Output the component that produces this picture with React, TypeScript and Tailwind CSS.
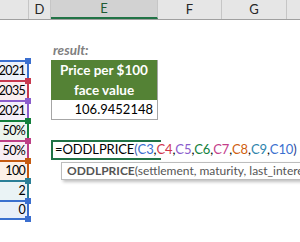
import React from 'react';

type Ref = { text: string; color: string; bg: string };

const RANGES: Ref[] = [
  { text: '2021', color: '#3b6fcf', bg: '#edf1fa' },
  { text: '2035', color: '#c8394f', bg: '#fbeef0' },
  { text: '2021', color: '#8a5ccc', bg: '#f4effa' },
  { text: '50%', color: '#12803c', bg: '#ecf5ee' },
  { text: '50%', color: '#bd3f86', bg: '#f9eef4' },
  { text: '100', color: '#c55a11', bg: '#fcf0e7' },
  { text: '2', color: '#2b7f97', bg: '#eaf3f5' },
  { text: '0', color: '#3b6fcf', bg: '#e9eff9' },
];

const ARGS: { t: string; c: string }[] = [
  { t: 'C3', c: '#3b6fcf' },
  { t: 'C4', c: '#d0364c' },
  { t: 'C5', c: '#8a5ccc' },
  { t: 'C6', c: '#12803c' },
  { t: 'C7', c: '#c43d8a' },
  { t: 'C8', c: '#d0600f' },
  { t: 'C9', c: '#2e85ad' },
  { t: 'C10', c: '#3b6fcf' },
];

const ColHead: React.FC<{ w: string; label?: string; active?: boolean }> = ({ w, label, active }) => (
  <div
    className={`${w} h-full flex items-center justify-center border-r border-[#c6c6c6] text-[13px] ${
      active ? 'bg-[#d2d2d2] text-[#1e5c34] border-b-2 border-b-[#217346]' : 'text-[#262626]'
    }`}
  >
    {label}
  </div>
);

const RangeCell: React.FC<{ r: Ref; last: boolean }> = ({ r, last }) => (
  <div
    className={`relative h-[20px] flex items-center justify-end pr-[2px] text-[12.5px] tracking-[-0.7px] whitespace-nowrap border-t-2 border-r-2 ${last ? 'border-b-2' : ''}`}
    style={{ borderColor: r.color, background: r.bg }}
  >
    {r.text}
    <span className="absolute right-[-4px] top-[-4px] w-[6px] h-[6px]" style={{ background: r.color }} />
    {last && <span className="absolute right-[-4px] bottom-[-4px] w-[6px] h-[6px]" style={{ background: r.color }} />}
  </div>
);

export default function App() {
  return (
    <div className="relative w-[300px] h-[242px] bg-white overflow-hidden text-[13px] text-black font-['Lato',sans-serif]">
      <div className="flex h-[20px] bg-[#e6e6e6] border-b border-[#a0a0a0]">
        <ColHead w="w-[29px]" />
        <ColHead w="w-[22px]" label="D" />
        <ColHead w="w-[107px]" label="E" active />
        <ColHead w="w-[64px]" label="F" />
        <ColHead w="w-[65px]" label="G" />
        <div className="flex-1" />
      </div>

      <div className="flex">
        <div className="w-[29px] pt-[40px] flex flex-col">
          {RANGES.map((r, i) => (
            <RangeCell key={i} r={r} last={i === RANGES.length - 1} />
          ))}
        </div>
        <div className="w-[22px]" />
        <div className="w-[107px] flex flex-col">
          <div className="h-[20px]" />
          <div className="h-[20px] flex items-center pl-[2px] italic font-bold text-[13.5px] text-[#7f7f7f]">result:</div>
          <div className="h-[40px] flex flex-col items-center justify-center bg-[#548235] text-white font-bold text-[13.5px] leading-[20px] border-r border-[#a6a6a6]">
            <span>Price per $100</span>
            <span>face value</span>
          </div>
          <div className="h-[20px] flex items-center justify-end pr-[4px] border-l border-r border-b border-[#a6a6a6]">
            106.9452148
          </div>
          <div className="h-[20px]" />
          <div className="h-[20px] flex items-center pl-[2px] tracking-[-0.1px] border-l-2 border-t-2 border-b-2 border-[#217346] w-[110px] whitespace-nowrap">
            <span>=ODDLPRICE</span>
            <span className="text-[#4062b0]">(</span>
            {ARGS.map((a, i) => (
              <React.Fragment key={i}>
                {i > 0 && <span>,</span>}
                <span style={{ color: a.c }}>{a.t}</span>
              </React.Fragment>
            ))}
            <span className="text-[#2d3f8f]">)</span>
          </div>
        </div>
      </div>

      <div className="absolute left-[61px] top-[162px] h-[18px] flex items-center px-[5px] bg-white border border-[#bdbdbd] shadow-[2px_2px_3px_rgba(0,0,0,0.25)] whitespace-nowrap text-[12px] text-[#555]">
        <span className="font-bold">ODDLPRICE</span>
        <span>(settlement, maturity, last_interest, rate, yld, redemption, frequency, [basis])</span>
      </div>
    </div>
  );
}
